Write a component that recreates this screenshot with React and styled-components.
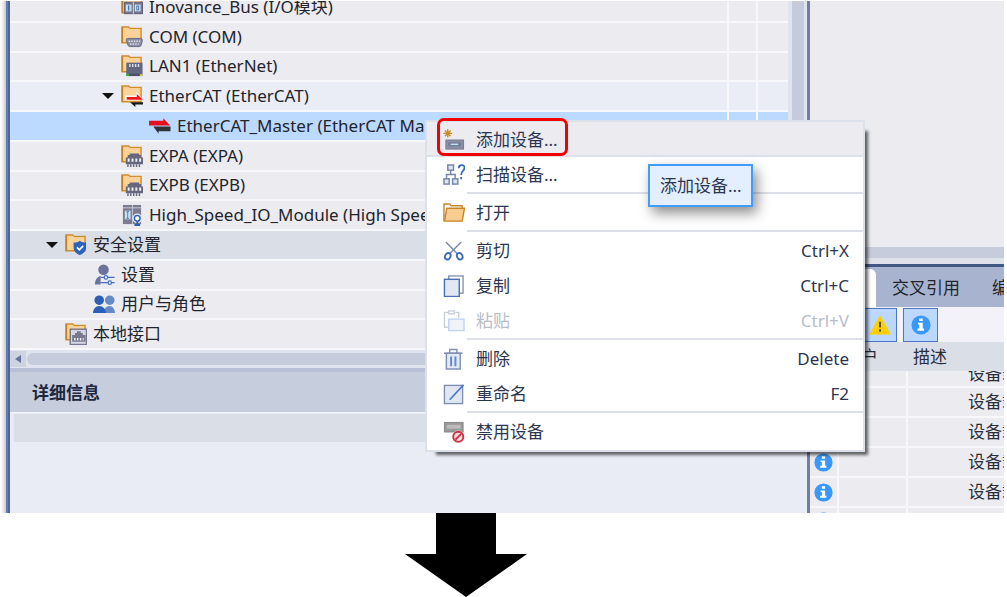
import { useState } from "react";
import styled, { createGlobalStyle } from "styled-components";

const FolderBase = () => (
  <>
    <path d="M1 1h7l1.500 1.500h11.500v15H1z" fill="#fbd398" stroke="#d08e30" strokeWidth="1.500" />
    <path d="M1.500 17.500V1.500" stroke="#c17f20" strokeWidth="1.500" />
  </>
);

const icons = {
  bus: (
    <>
      <FolderBase />
      <rect x="3.500" y="6.500" width="19" height="12" fill="#77778f" stroke="#5c5d78" />
      <path d="M13 6v13" stroke="#cfd3e2" />
      <rect x="5" y="9" width="6" height="7" fill="#c9e3f5" />
      <rect x="14.500" y="9" width="6" height="7" fill="#c9e3f5" />
      <path d="M8 10v5" stroke="#4578aa" strokeWidth="1.500" />
      <rect x="16.500" y="10.500" width="2" height="4" fill="none" stroke="#4578aa" />
    </>
  ),
  com: (
    <>
      <FolderBase />
      <path d="M7 13h13.500q2 0 1.800 2l-1 4.500q-.4 2-2.300 2H9.500q-2 0-2.500-2l-1.500-4.500q-.5-2 1.500-2z" fill="#8b8da5" stroke="#666983" />
      <path d="M8 16h12M9.500 18.800h9" stroke="#e4e5ef" strokeWidth="1.500" strokeDasharray="1.500 1.200" />
    </>
  ),
  lan: (
    <>
      <FolderBase />
      <rect x="5.500" y="8" width="17" height="14" fill="#636680" />
      <path d="M8.500 11h11" stroke="#dddfea" strokeWidth="3" strokeDasharray="1.500 1.500" />
      <path d="M5.500 20h3v2h-3z" fill="#35b34a" />
      <path d="M19.500 20h3v2h-3z" fill="#d5c84b" />
      <path d="M8.500 19.500h11V22h-11z" fill="#4e5069" />
    </>
  ),
  ethercat: (
    <>
      <FolderBase />
      <path d="M4 11h12V7l7.500 9H4z" fill="#fff" />
      <path d="M6 12.500h10.500V9.500L23 15.500H6z" fill="#f01818" />
      <path d="M23 18v2.500h-8V23l-5.500-5z" fill="#181818" />
    </>
  ),
  master: (
    <>
      <path d="M0 6h15V3.500L22 11H0z" fill="#e50f20" />
      <path d="M22.500 12v5H10v2.500L4.500 12z" fill="#303236" />
    </>
  ),
  exp: (
    <>
      <FolderBase />
      <path d="M5 13h2v-2.500h2V9h10v1.500h2V13h2v7H5z" fill="#66677f" />
      <path d="M7 15.800h15" stroke="#f1f2f7" strokeWidth="3.200" strokeDasharray="2 2" />
      <path d="M6.500 21.500h15" stroke="#66677f" strokeWidth="3" strokeDasharray="1.500 1.500" />
    </>
  ),
  module: (
    <>
      <rect x="2" y="1" width="19" height="20" fill="#7b7c92" />
      <path d="M2 4h19M12 1v20" stroke="#c7c9d6" />
      <rect x="4" y="7" width="6" height="9" fill="#c9e3f5" />
      <path d="M7 8v7M5.500 8h3M5.500 15h3" stroke="#507fae" />
      <circle cx="17" cy="15" r="5" fill="#f1f3f9" />
      <circle cx="17" cy="15" r="3" fill="#fff" stroke="#2b62b8" strokeWidth="1.500" />
      <path d="M17 18v4M14 22h6" stroke="#2b62b8" strokeWidth="2" />
    </>
  ),
  security: (
    <>
      <FolderBase />
      <path d="M15.500 7c2 1.500 4 2 6.500 2v5c0 4-3 6.500-6.500 8-3.500-1.500-6.500-4-6.500-8V9c2.500 0 4.500-.5 6.500-2z" fill="#2d62bb" />
      <path d="M12.500 14l2.500 2.500 4-4" fill="none" stroke="#fff" strokeWidth="1.800" />
    </>
  ),
  userSettings: (
    <>
      <circle cx="11" cy="6" r="5.500" fill="#69739b" />
      <path d="M2 21.500c0-5 2.500-8.500 6-9v9z" fill="#69739b" />
      <path d="M8 14h14.500M8 19.500h14.500" stroke="#3f70bd" strokeWidth="1.500" />
      <circle cx="13.500" cy="14" r="1.800" fill="#fff" stroke="#3f70bd" strokeWidth="1.300" />
      <circle cx="17.500" cy="19.500" r="1.800" fill="#fff" stroke="#3f70bd" strokeWidth="1.300" />
    </>
  ),
  users: (
    <>
      <circle cx="17.500" cy="7.500" r="5" fill="#678ac7" />
      <path d="M11 21c0-4 2.500-7.500 6.500-7.500 3 0 5.500 3.500 5.500 7.500z" fill="#678ac7" />
      <circle cx="6.500" cy="7.500" r="5" fill="#2b5eb5" />
      <path d="M0 21c0-4 2.500-7.500 6.500-7.500s7 3.500 7 7.500z" fill="#2b5eb5" />
    </>
  ),
  local: (
    <>
      <FolderBase />
      <rect x="5.500" y="6.500" width="17" height="16" fill="#d6d7e2" stroke="#77788e" strokeWidth="1.500" />
      <path d="M7.500 19.500v-7h3v-2h2V8.500h4v2h2v2h3v7z" fill="#77788e" />
      <path d="M9.500 17h10" stroke="#f1f2f7" strokeWidth="2.500" strokeDasharray="1.500 1.500" />
    </>
  ),
  add: (
    <>
      <path d="M5 0v9M.5 4.500h9M2 1.500l6 6M8 1.500l-6 6" stroke="#c98a24" strokeWidth="1.400" />
      <rect x="3" y="11.500" width="18.500" height="9.500" fill="#8c8ea6" stroke="#77798f" />
      <rect x="5.500" y="14" width="13.500" height="4" fill="#717c99" />
      <path d="M8 16h8" stroke="#c4e0f2" strokeWidth="1.500" />
    </>
  ),
  scan: (
    <>
      <g fill="#dbe6f3" stroke="#7484ab" strokeWidth="1.500">
        <rect x="5" y="1" width="6" height="5.500" />
        <rect x="1" y="15.500" width="5.500" height="5.500" />
        <rect x="10" y="15.500" width="5.500" height="5.500" />
      </g>
      <path d="M8 6.500v4.500M3.700 15.500V11h9v4.500" fill="none" stroke="#7484ab" strokeWidth="1.500" />
      <path d="M16.500 4.500c0-4.500 6-4.500 6-.5 0 3-3.500 3-3.500 7.500M19 13.500v2.500" fill="none" stroke="#3567b8" strokeWidth="1.800" />
    </>
  ),
  open: (
    <>
      <path d="M1 20V2h6l1.500 2H20v3" fill="#fff" stroke="#c88528" strokeWidth="1.500" />
      <path d="M4 6.500h18.500L20 20H1.500z" fill="#f8ce90" stroke="#c88528" strokeWidth="1.500" strokeLinejoin="round" />
    </>
  ),
  cut: (
    <>
      <path d="M3 2l12 12.500M19 2L7 14.500" stroke="#7c89ac" strokeWidth="1.500" />
      <g fill="none" stroke="#3d6cbc" strokeWidth="2">
        <ellipse cx="5" cy="17" rx="2.800" ry="3.500" transform="rotate(25 5 17)" />
        <ellipse cx="17.500" cy="17" rx="2.800" ry="3.500" transform="rotate(-25 17.500 17)" />
      </g>
    </>
  ),
  copy: (
    <>
      <rect x="6" y="1" width="15" height="18" fill="#fff" stroke="#8391b4" strokeWidth="1.400" />
      <rect x="1.500" y="4.500" width="15.500" height="18" fill="#e1e8f2" stroke="#4a70b5" strokeWidth="1.500" />
    </>
  ),
  paste: (
    <>
      <path d="M6 2.500H1.500V18H5M13 2.500h3.500V8" fill="none" stroke="#c9cedb" strokeWidth="1.400" />
      <rect x="6" y="1" width="6" height="3" fill="#fff" stroke="#c9cedb" strokeWidth="1.400" />
      <rect x="6" y="9.500" width="16" height="12" fill="#eff4fb" stroke="#c0d2ec" strokeWidth="1.400" />
    </>
  ),
  remove: (
    <>
      <path d="M3.500 5.500h14.500V22H3.500z" fill="#e3e9f4" stroke="#8290b5" strokeWidth="1.500" />
      <path d="M1 5.500h19.500M7 5V1.500h7.500V5" fill="none" stroke="#8290b5" strokeWidth="1.500" />
      <path d="M8.500 9v10M13 9v10" stroke="#5f87cb" strokeWidth="2" />
    </>
  ),
  rename: (
    <>
      <rect x="1.500" y="2.500" width="19" height="19" fill="#e0e7f2" stroke="#7e8cb0" strokeWidth="1.400" />
      <path d="M7 17.500L21.500 2" stroke="#4e7ac6" strokeWidth="1.800" />
    </>
  ),
  disable: (
    <>
      <rect x="1.500" y="1.500" width="19.500" height="10" fill="#9a9a9a" stroke="#858585" />
      <rect x="4" y="4" width="14.500" height="4" fill="#bcbcbc" />
      <circle cx="16" cy="16.500" r="6.500" fill="#fff" />
      <circle cx="16" cy="16.500" r="5.300" fill="#f6dcdf" stroke="#cf3040" strokeWidth="2" />
      <path d="M13 19.500l6-6" stroke="#cf3040" strokeWidth="2" />
    </>
  ),
  warning: (
    <>
      <path d="M11.500 2L22 21H1z" fill="#ffd000" stroke="#ffd000" strokeLinejoin="round" />
      <path d="M11.500 8v6M11.500 16v2.500" stroke="#4b4635" strokeWidth="2" />
    </>
  ),
  info: (
    <>
      <circle cx="11.500" cy="11.500" r="11" fill="#3898fb" />
      <path d="M9.500 4h4v3h-4zM8 9h5.500v6.500H15V18H7.500v-2.500h2V11H8z" fill="#fff" />
    </>
  ),
};

const Icon = ({ name, size = 22 }) => (
  <IconSvg viewBox="0 0 23 23" width={size} height={size} aria-hidden="true">
    {icons[name]}
  </IconSvg>
);

const treeRows = [
  { level: 3, icon: "bus", text: "Inovance_Bus (I/O模块)" },
  { level: 3, icon: "com", text: "COM (COM)" },
  { level: 3, icon: "lan", text: "LAN1 (EtherNet)" },
  { level: 3, icon: "ethercat", text: "EtherCAT (EtherCAT)", open: true, tone: "#eaedf5" },
  { level: 4, icon: "master", text: "EtherCAT_Master (EtherCAT Master)", tone: "#bcd9ff", selected: true },
  { level: 3, icon: "exp", text: "EXPA (EXPA)" },
  { level: 3, icon: "exp", text: "EXPB (EXPB)" },
  { level: 3, icon: "module", text: "High_Speed_IO_Module (High Speed IO Module)" },
  { level: 1, icon: "security", text: "安全设置", open: true, tone: "#d9dee7" },
  { level: 2, icon: "userSettings", text: "设置" },
  { level: 2, icon: "users", text: "用户与角色" },
  { level: 1, icon: "local", text: "本地接口" },
];

const menuGroups = [
  [
    { icon: "add", text: "添加设备..." },
    { icon: "scan", text: "扫描设备..." },
  ],
  [{ icon: "open", text: "打开" }],
  [
    { icon: "cut", text: "剪切", keys: "Ctrl+X" },
    { icon: "copy", text: "复制", keys: "Ctrl+C" },
    { icon: "paste", text: "粘贴", keys: "Ctrl+V", disabled: true },
  ],
  [
    { icon: "remove", text: "删除", keys: "Delete" },
    { icon: "rename", text: "重命名", keys: "F2" },
  ],
  [{ icon: "disable", text: "禁用设备" }],
];

const messages = [
  { id: 1, text: "设备载入", height: 15, end: true },
  { id: 2, text: "设备载入" },
  { id: 3, text: "设备载入" },
  { id: 4, text: "设备载入" },
  { id: 5, text: "设备载入" },
  { id: 6, text: "设备载入", height: 5 },
];

const ContextMenu = ({ active, onSelect }) => (
  <Menu role="menu">
    {menuGroups.map((group, index) => (
      <MenuGroup key={index}>
        {group.map((item) => (
          <MenuItem
            key={item.text}
            type="button"
            role="menuitem"
            disabled={item.disabled}
            $active={item.text === active}
            onClick={() => onSelect(item.text)}
          >
            <Icon name={item.icon} />
            <MenuText>{item.text}</MenuText>
            {item.keys && <span>{item.keys}</span>}
            {item.text === active && <Highlight />}
          </MenuItem>
        ))}
      </MenuGroup>
    ))}
    <Tooltip role="tooltip">添加设备...</Tooltip>
  </Menu>
);

const App = () => {
  const [active, setActive] = useState("添加设备...");

  return (
    <Page>
      <GlobalStyle />
      <Frame>
        <LeftEdge />
        <LeftPanel>
          <TreeArea>
            <Tree role="tree">
              {treeRows.map((row) => (
                <TreeRow key={row.text} role="treeitem" aria-selected={!!row.selected} $tone={row.tone}>
                  <TreeLabel $level={row.level}>
                    <Toggle>
                      {row.open && (
                        <svg width="12" height="6" viewBox="0 0 12 6">
                          <path d="M0 0h12L6 6z" fill="#111" />
                        </svg>
                      )}
                    </Toggle>
                    <Icon name={row.icon} />
                    {row.text}
                  </TreeLabel>
                  <TreeCell $width={29} />
                  <TreeCell $width={32} />
                </TreeRow>
              ))}
            </Tree>
            <VerticalBar>
              <VerticalThumb />
            </VerticalBar>
          </TreeArea>
          <HorizontalBar>
            <ScrollButton type="button" aria-label="向左滚动">
              <svg width="6" height="8" viewBox="0 0 6 8">
                <path d="M6 0v8L0 4z" fill="#66739c" />
              </svg>
            </ScrollButton>
            <HorizontalThumb />
          </HorizontalBar>
          <DetailsTitle>详细信息</DetailsTitle>
          <DetailsBody>
            <DetailsBar />
          </DetailsBody>
          <ContextMenu active={active} onSelect={setActive} />
        </LeftPanel>
        <RightPanel>
          <Workspace />
          <WorkspaceBar />
          <Tabs role="tablist">
            <Tab type="button" role="tab" aria-label="信息" aria-selected $active />
            <Tab type="button" role="tab" aria-selected={false}>交叉引用</Tab>
            <Tab type="button" role="tab" aria-selected={false}>编译</Tab>
          </Tabs>
          <Toolbar>
            <FilterButton type="button" aria-label="警告">
              <Icon name="warning" />
            </FilterButton>
            <FilterButton type="button" aria-label="消息">
              <Icon name="info" size={20} />
            </FilterButton>
          </Toolbar>
          <MessageTable>
            <colgroup>
              <col width="28" />
              <col width="69" />
              <col />
            </colgroup>
            <thead>
              <tr>
                <HeadCell />
                <HeadCell>用户</HeadCell>
                <HeadCell>描述</HeadCell>
              </tr>
            </thead>
            <tbody>
              {messages.map((message) => (
                <tr key={message.id}>
                  <Cell>
                    <Clip $height={message.height} $end={message.end} $icon>
                      <Icon name="info" size={19} />
                    </Clip>
                  </Cell>
                  <Cell />
                  <Cell>
                    <Clip $height={message.height} $end={message.end}>
                      <Message>{message.text}</Message>
                    </Clip>
                  </Cell>
                </tr>
              ))}
            </tbody>
          </MessageTable>
        </RightPanel>
      </Frame>
      <NextArrow viewBox="0 0 122 84" aria-hidden="true">
        <path d="M31 0h60v41h31L61 84 0 41h31z" fill="#000" />
      </NextArrow>
    </Page>
  );
};

export default App;

const GlobalStyle = createGlobalStyle`
  * {
    box-sizing: border-box;
  }

  body {
    margin: 0;
    background: #fff;
    color: #22242c;
    font-family: "Noto Sans", "Noto Sans CJK SC", sans-serif;
    font-size: 17px;
    line-height: 24px;
  }

  button {
    padding: 0;
    border: none;
    background: none;
    color: inherit;
    font: inherit;
  }
`;

const Page = styled.main`
  padding: 1px 3px 0 0;
  overflow: hidden;
`;

const Frame = styled.div`
  display: grid;
  grid-template-columns: 10px minmax(0, 1fr) 197px;
`;

const IconSvg = styled.svg`
  flex: none;
  display: block;
`;

const LeftEdge = styled.div`
  border-right: 2px solid #53658f;
  background: linear-gradient(to right, #fff 1px, #c9c9c9 6px, #5a80ba 6px);
`;

const LeftPanel = styled.section`
  position: relative;
  display: flex;
  flex-direction: column;
  background: #e9ecf5;
`;

const TreeArea = styled.div`
  display: flex;
  overflow: hidden;
`;

const Tree = styled.ul`
  flex: 1;
  display: grid;
  grid-template-rows: repeat(12, 1fr);
  min-width: 0;
  height: 357px;
  margin: -8px 0 0;
  padding: 0;
  list-style: none;
`;

const TreeRow = styled.li`
  display: flex;
  min-height: 0;
  border-bottom: 2px solid #f8f8fa;
  background: ${({ $tone }) => $tone || "#ecebf0"};
`;

const TreeLabel = styled.div`
  flex: 1;
  display: flex;
  align-items: center;
  gap: 6px;
  min-width: 0;
  padding-left: ${({ $level }) => 8 + $level * 28}px;
  overflow: hidden;
  white-space: nowrap;
`;

const Toggle = styled.span`
  flex: none;
  display: flex;
  width: 13px;
`;

const TreeCell = styled.div`
  width: ${({ $width }) => $width}px;
  border-left: 2px solid #f8f8fa;
`;

const VerticalBar = styled.div`
  display: flex;
  justify-content: center;
  width: 19px;
  background: #e0e4ed;
`;

const VerticalThumb = styled.div`
  width: 12px;
  background: #c5cbdc;
`;

const HorizontalBar = styled.div`
  display: flex;
  align-items: center;
  height: 18px;
  padding-bottom: 1px;
  background: #e0e4ee;
`;

const ScrollButton = styled.button`
  display: flex;
  align-items: center;
  justify-content: center;
  width: 16px;
  height: 16px;
  background: #cdd3e1;
`;

const HorizontalThumb = styled.div`
  flex: 1;
  height: 12px;
  margin: 0 19px 0 1px;
  border-radius: 6px;
  background: #c5ccdc;
`;

const DetailsTitle = styled.h2`
  margin: 0;
  padding: 9px 22px 7px;
  border-top: 4px solid #b8c0d5;
  border-bottom: 1px solid #f4f5f9;
  background: #c6cddd;
  color: #1d2740;
  font-size: 17px;
  font-weight: 700;
  line-height: 24px;
`;

const DetailsBody = styled.div`
  flex: 1;
  min-height: 100px;
  padding: 1px 4px;
`;

const DetailsBar = styled.div`
  height: 28px;
  background: #dadee7;
`;

const Menu = styled.div`
  position: absolute;
  top: 119px;
  left: 415px;
  width: 440px;
  padding-bottom: 1px;
  border: 2px solid #dbe0e9;
  background: #fff;
  box-shadow: 7px 7px 3px -4px rgba(0, 0, 0, 0.6);
  color: #2b3550;
`;

const MenuGroup = styled.div`
  & + & {
    padding-top: 3px;
    background: linear-gradient(#dddfe9, #dddfe9) 40px 0 / 100% 2px no-repeat;
  }
`;

const MenuItem = styled.button`
  position: relative;
  display: flex;
  align-items: center;
  gap: 11px;
  width: 100%;
  height: 35px;
  padding: 0 14px 0 16px;
  background: ${({ $active }) => ($active ? "#ecebf0" : "none")};
  box-shadow: ${({ $active }) => ($active ? "inset 0 -2px #dbe0e9" : "none")};
  text-align: left;

  &:disabled {
    color: #b9bdc8;
  }
`;

const MenuText = styled.span`
  flex: 1;
`;

const Highlight = styled.span`
  position: absolute;
  top: -4px;
  left: 10px;
  width: 131px;
  height: 38px;
  border: 3px solid #f00000;
  border-radius: 7px;
`;

const Tooltip = styled.div`
  position: absolute;
  top: 42px;
  left: 221px;
  padding: 8px 9px 7px 10px;
  border: 2px solid #409cff;
  background: #e3efff;
  box-shadow: 4px 6px 12px rgba(0, 0, 0, 0.45);
  white-space: nowrap;
`;

const RightPanel = styled.section`
  display: flex;
  flex-direction: column;
  min-width: 0;
  border-left: 3px solid #6f7fa3;
  background: #ecebf0;
  overflow: hidden;
`;

const Workspace = styled.div`
  flex: 1;
`;

const WorkspaceBar = styled.div`
  height: 17px;
  border-bottom: 6px solid #dfe2ea;
  background: #c6ccdc;
`;

const Tabs = styled.div`
  display: flex;
  height: 43px;
  padding-top: 2px;
  border-top: 3px solid #435985;
  background: #a8b4cf;
`;

const Tab = styled.button`
  flex: none;
  min-width: ${({ $active }) => ($active ? "66px" : "0")};
  padding: 0 16px;
  border-radius: 0 6px 0 0;
  background: ${({ $active }) => ($active ? "#fff" : "none")};
`;

const Toolbar = styled.div`
  display: flex;
  gap: 6px;
  padding: 1px 0 0 52px;
  background: #f3f2f8;
`;

const FilterButton = styled.button`
  display: flex;
  align-items: center;
  justify-content: center;
  width: 35px;
  height: 34px;
  border: 1px solid #4f76c4;
  background: #bcd8ff;
`;

const MessageTable = styled.table`
  width: 100%;
  table-layout: fixed;
  border-collapse: collapse;
  color: #2a2e3a;
`;

const HeadCell = styled.th`
  height: 29px;
  padding: 0 0 0 6px;
  background: #dadee6;
  font-weight: 400;
  text-align: left;
  white-space: nowrap;
`;

const Cell = styled.td`
  padding: 0;
  border-right: 2px solid #f8f8fa;
  border-bottom: 2px solid #f8f8fa;

  &:last-child {
    border-right: none;
  }

  tr:last-child & {
    border-bottom: none;
  }
`;

const Clip = styled.div`
  display: flex;
  align-items: ${({ $height, $end }) => ($end ? "flex-end" : $height ? "flex-start" : "center")};
  height: ${({ $height }) => $height || 28}px;
  padding-left: ${({ $icon }) => ($icon ? 4 : 60)}px;
  padding-top: ${({ $height, $end }) => ($height && !$end ? 4 : 0)}px;
  overflow: hidden;
`;

const Message = styled.span`
  flex: none;
  white-space: nowrap;
`;

const NextArrow = styled.svg`
  display: block;
  width: 122px;
  height: 84px;
  margin-left: 405px;
`;
